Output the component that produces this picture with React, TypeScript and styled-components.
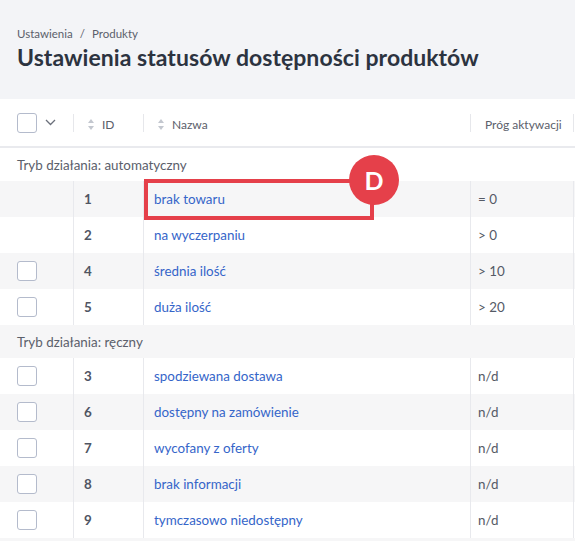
import React from 'react';
import styled, { createGlobalStyle } from 'styled-components';

const GlobalStyle = createGlobalStyle`
  html, body {
    margin: 0;
    padding: 0;
    background: #ffffff;
  }
  body {
    font-family: Lato, "Noto Sans", sans-serif;
    color: #555a66;
    overflow: hidden;
  }
`;

const Page = styled.div`
  width: 575px;
  height: 541px;
  overflow: hidden;
`;

const Header = styled.div`
  background: #f3f4f7;
  height: 99px;
  box-sizing: border-box;
  padding: 26px 17px 0;
`;

const Breadcrumb = styled.div`
  display: flex;
  gap: 7px;
  font-size: 11.5px;
  line-height: 15px;
  color: #5b606b;
`;

const Title = styled.h1`
  margin: 1px 0 0;
  font-size: 23px;
  line-height: 30px;
  font-weight: 700;
  letter-spacing: 0.05px;
  color: #2c3340;
  white-space: nowrap;
`;

const COLS = '73px 70px 327px 103px 200px';

const HeadRow = styled.div`
  display: grid;
  grid-template-columns: ${COLS};
  height: 47px;
  border-bottom: 2px solid #e9eaee;
  align-items: center;
`;

const HeadCell = styled.div<{ first?: boolean }>`
  display: flex;
  align-items: center;
  gap: 8px;
  height: 18px;
  padding-left: ${p => (p.first ? '17px' : '14px')};
  border-left: ${p => (p.first ? 'none' : '1px solid #e6e7eb')};
  font-size: 12px;
  color: #5b606b;
  white-space: nowrap;
`;

const HeadLabel = styled.span`
  padding-top: 3px;
`;

const Check = styled.span`
  display: inline-block;
  width: 18px;
  height: 18px;
  border: 1px solid #b4bbcc;
  border-radius: 3px;
  background: #fff;
  flex-shrink: 0;
`;

const Row = styled.div<{ striped?: boolean }>`
  display: grid;
  grid-template-columns: ${COLS};
  height: 36px;
  background: ${p => (p.striped ? '#f6f6f7' : '#ffffff')};
`;

const Cell = styled.div<{ first?: boolean; pad?: number }>`
  position: relative;
  display: flex;
  align-items: center;
  padding-left: ${p => (p.first ? 17 : p.pad ?? 10)}px;
  border-left: ${p => (p.first ? 'none' : '1px solid #e8e9ed')};
  font-size: 13.4px;
  white-space: nowrap;
`;

const IdCell = styled(Cell)`
  font-weight: 700;
  color: #505563;
`;

const Link = styled.span`
  color: #3565c9;
`;

const GroupRow = styled.div<{ striped?: boolean }>`
  height: 33px;
  display: flex;
  align-items: center;
  padding-left: 17px;
  font-size: 13.4px;
  color: #5b606b;
  background: ${p => (p.striped ? '#f6f6f7' : '#ffffff')};
`;

const Highlight = styled.div`
  position: absolute;
  left: 0;
  top: -2px;
  width: 230px;
  height: 41px;
  box-sizing: border-box;
  border: 4px solid #e5404a;
  pointer-events: none;
`;

const Badge = styled.div`
  position: absolute;
  left: 205px;
  top: -26px;
  width: 50px;
  height: 50px;
  border-radius: 50%;
  background: #e5404a;
  color: #ffffff;
  display: flex;
  align-items: center;
  justify-content: center;
  font-size: 25px;
  font-weight: 700;
`;

const SortIcon = () => (
  <svg width="6" height="11" viewBox="0 0 6 11" style={{ marginTop: 3 }}>
    <path d="M3 0 L6 4 H0 Z" fill="#c3c7cf" />
    <path d="M3 11 L6 7 H0 Z" fill="#c3c7cf" />
  </svg>
);

const Chevron = () => (
  <svg width="11" height="7" viewBox="0 0 11 7">
    <path d="M1 1 L5.5 5.5 L10 1" fill="none" stroke="#6b707b" strokeWidth="1.3" />
  </svg>
);

type Item = { id: number; name: string; threshold: string; check: boolean; marked?: boolean };

const groups: { label: string; items: Item[] }[] = [
  {
    label: 'Tryb działania: automatyczny',
    items: [
      { id: 1, name: 'brak towaru', threshold: '= 0', check: false, marked: true },
      { id: 2, name: 'na wyczerpaniu', threshold: '> 0', check: false },
      { id: 4, name: 'średnia ilość', threshold: '> 10', check: true },
      { id: 5, name: 'duża ilość', threshold: '> 20', check: true },
    ],
  },
  {
    label: 'Tryb działania: ręczny',
    items: [
      { id: 3, name: 'spodziewana dostawa', threshold: 'n/d', check: true },
      { id: 6, name: 'dostępny na zamówienie', threshold: 'n/d', check: true },
      { id: 7, name: 'wycofany z oferty', threshold: 'n/d', check: true },
      { id: 8, name: 'brak informacji', threshold: 'n/d', check: true },
      { id: 9, name: 'tymczasowo niedostępny', threshold: 'n/d', check: true },
    ],
  },
];

export default function App() {
  let index = 0;
  const body: React.ReactNode[] = [];
  groups.forEach(g => {
    body.push(
      <GroupRow key={g.label} striped={index % 2 === 1}>
        {g.label}
      </GroupRow>
    );
    index++;
    g.items.forEach(item => {
      body.push(
        <Row key={item.id} striped={index % 2 === 1}>
          <Cell first>{item.check && <Check />}</Cell>
          <IdCell>{item.id}</IdCell>
          <Cell>
            <Link>{item.name}</Link>
            {item.marked && (
              <>
                <Highlight />
                <Badge>D</Badge>
              </>
            )}
          </Cell>
          <Cell pad={7}>{item.threshold}</Cell>
          <Cell />
        </Row>
      );
      index++;
    });
  });
  body.push(<Row key="next" striped={index % 2 === 1} />);

  return (
    <Page>
      <GlobalStyle />
      <Header>
        <Breadcrumb>
          <span>Ustawienia</span>
          <span>/</span>
          <span>Produkty</span>
        </Breadcrumb>
        <Title>Ustawienia statusów dostępności produktów</Title>
      </Header>
      <HeadRow>
        <HeadCell first>
          <Check />
          <Chevron />
        </HeadCell>
        <HeadCell>
          <SortIcon />
          <HeadLabel>ID</HeadLabel>
        </HeadCell>
        <HeadCell>
          <SortIcon />
          <HeadLabel>Nazwa</HeadLabel>
        </HeadCell>
        <HeadCell>
          <HeadLabel>Próg aktywacji</HeadLabel>
        </HeadCell>
        <HeadCell />
      </HeadRow>
      {body}
    </Page>
  );
}
